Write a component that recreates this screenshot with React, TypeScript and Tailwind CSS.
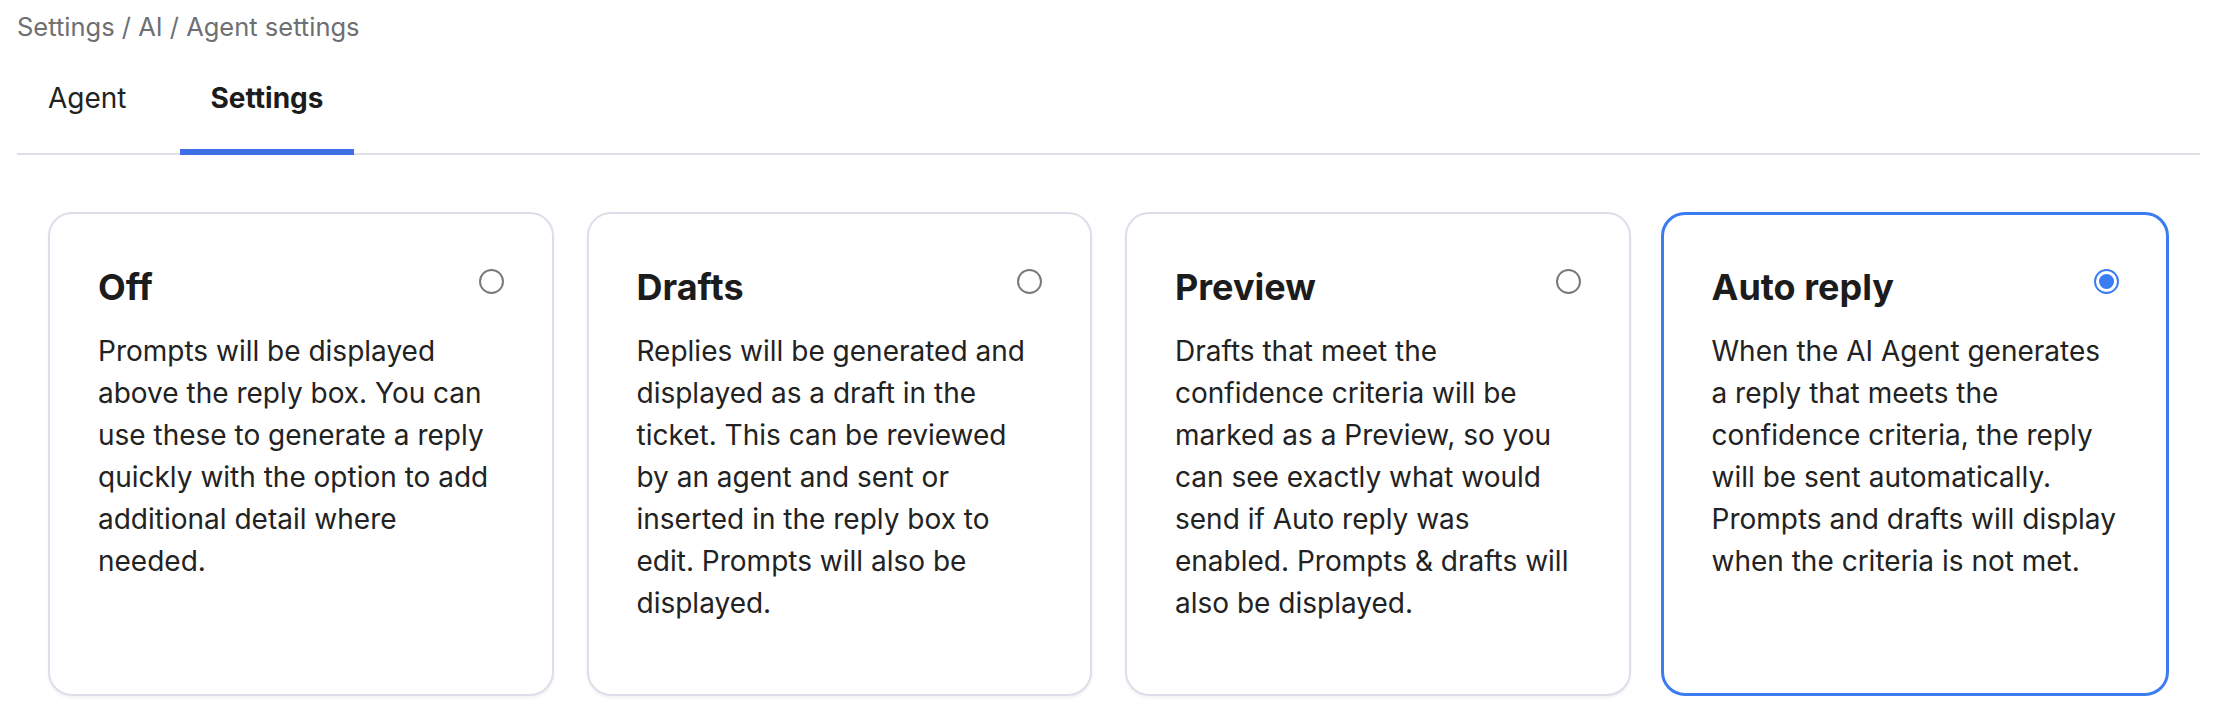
import { useState } from "react";

type Mode = {
  id: string;
  title: string;
  lines: string[];
};

// line breaks kept as they fall in the design
const modes: Mode[] = [
  {
    id: "off",
    title: "Off",
    lines: [
      "Prompts will be displayed",
      "above the reply box. You can",
      "use these to generate a reply",
      "quickly with the option to add",
      "additional detail where",
      "needed.",
    ],
  },
  {
    id: "drafts",
    title: "Drafts",
    lines: [
      "Replies will be generated and",
      "displayed as a draft in the",
      "ticket. This can be reviewed",
      "by an agent and sent or",
      "inserted in the reply box to",
      "edit. Prompts will also be",
      "displayed.",
    ],
  },
  {
    id: "preview",
    title: "Preview",
    lines: [
      "Drafts that meet the",
      "confidence criteria will be",
      "marked as a Preview, so you",
      "can see exactly what would",
      "send if Auto reply was",
      "enabled. Prompts & drafts will",
      "also be displayed.",
    ],
  },
  {
    id: "auto",
    title: "Auto reply",
    lines: [
      "When the AI Agent generates",
      "a reply that meets the",
      "confidence criteria, the reply",
      "will be sent automatically.",
      "Prompts and drafts will display",
      "when the criteria is not met.",
    ],
  },
];

function Radio({ checked }: { checked: boolean }) {
  if (checked) {
    return (
      <span className="flex h-[25px] w-[25px] shrink-0 items-center justify-center rounded-full border-2 border-[#3b7cf2] bg-white">
        <span className="h-[15px] w-[15px] rounded-full bg-[#3b7cf2]" />
      </span>
    );
  }
  return <span className="block h-[25px] w-[25px] shrink-0 rounded-full border-2 border-[#7a7a7a] bg-white" />;
}

export default function App() {
  const [tab, setTab] = useState("settings");
  const [mode, setMode] = useState("auto");

  return (
    <div className="min-h-screen bg-white pl-[17px] pr-[28px] font-['Inter','Liberation_Sans',sans-serif] text-[#1f1f1f]">
      <div className="pt-[12px] text-[25.5px] leading-[30px] text-[#6f6f73]">Settings / AI / Agent settings</div>

      <div className="flex gap-[22px] border-b-2 border-[#e0dfe8]">
        {[
          { id: "agent", label: "Agent" },
          { id: "settings", label: "Settings" },
        ].map((t) => (
          <button
            key={t.id}
            onClick={() => setTab(t.id)}
            className={`relative px-[31px] pt-[40px] pb-[39px] text-[28px] leading-[32px] ${
              tab === t.id ? "font-bold text-[#1c1c1c]" : "font-normal text-[#222]"
            }`}
          >
            {t.label}
            {tab === t.id && <span className="absolute inset-x-0 -bottom-[2px] h-[6px] bg-[#3f6fe4]" />}
          </button>
        ))}
      </div>

      <div className="grid grid-cols-4 gap-[33px] px-[31px] pt-[57px]">
        {modes.map((m) => {
          const active = mode === m.id;
          return (
            <div
              key={m.id}
              onClick={() => setMode(m.id)}
              className={`h-[484px] cursor-pointer rounded-[24px] bg-white ${
                active
                  ? "-ml-[3px] border-[3px] border-[#3b7cf2] pt-[50px] pr-[47px] pl-[48px]"
                  : "border-2 border-[#dfdde9] pt-[51px] pr-[48px] pl-[48px] shadow-[0_2px_3px_rgba(40,40,80,0.06)]"
              }`}
            >
              <div className="flex items-start justify-between">
                <h2 className="text-[36px] leading-[44px] font-bold text-[#1c1c1c]">{m.title}</h2>
                <div className="mt-[4px]">
                  <Radio checked={active} />
                </div>
              </div>
              <p className="mt-[21px] whitespace-nowrap text-[28px] leading-[42px] text-[#222]">
                {m.lines.map((l, i) => (
                  <span key={i} className="block">
                    {l}
                  </span>
                ))}
              </p>
            </div>
          );
        })}
      </div>
    </div>
  );
}
